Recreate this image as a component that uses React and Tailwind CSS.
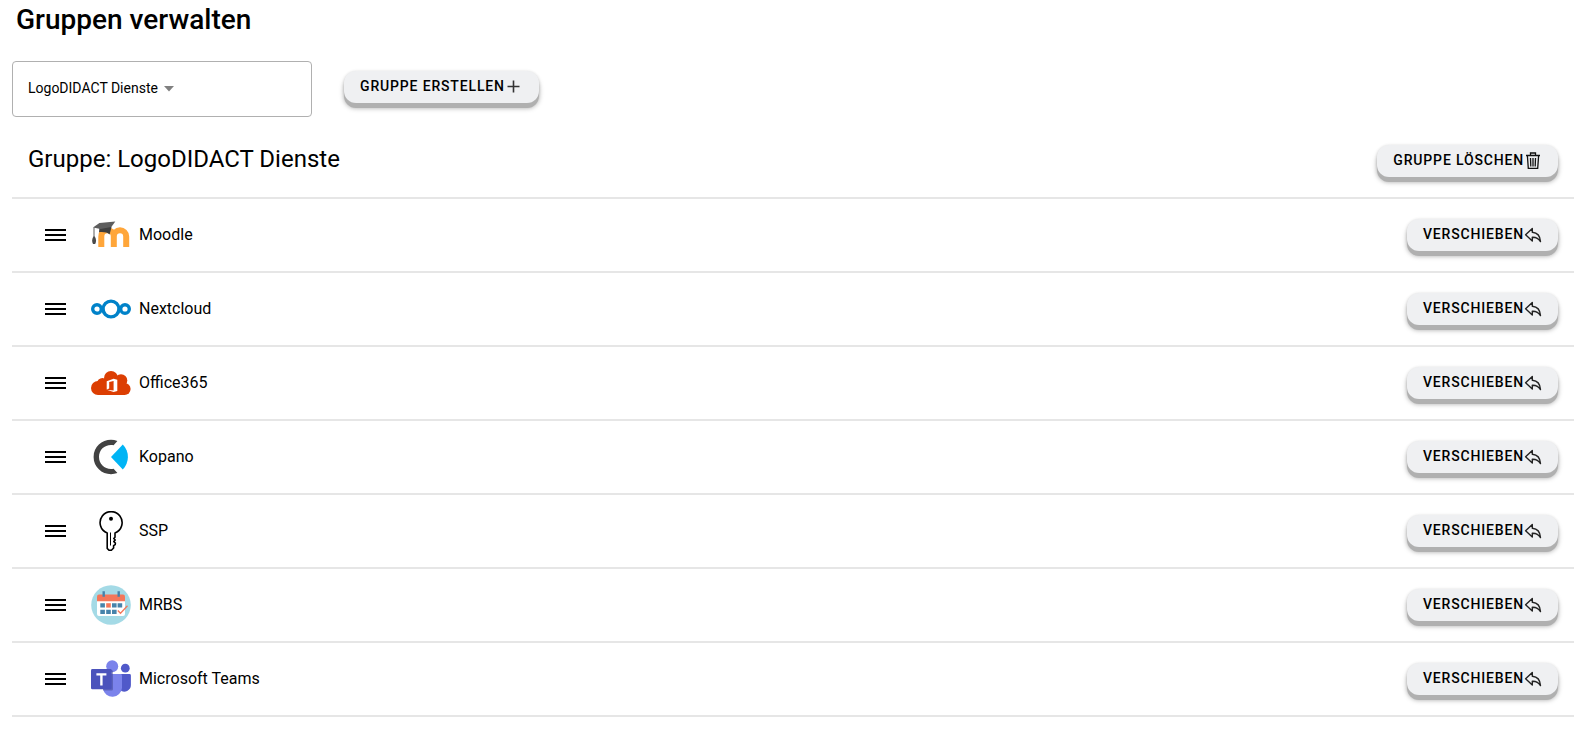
import React, { useState } from 'react';
import clsx from 'clsx';

const MoodleIcon = () => (
  <svg viewBox="0 0 40 40" className="size-10" aria-hidden="true">
    <path
      d="M10.300 32V21.400a6.200 6.200 0 0 1 12.500 0V32M22.800 32V21.400a6.200 6.200 0 0 1 12.400 0V32"
      fill="none"
      stroke="#ffa63a"
      strokeWidth="6"
    />
    <path d="M8.400 12.600 8 17.200c4.600-.6 8 .2 10.600 2.200l2-7.600z" fill="#3f3f3f" />
    <path d="M2 12.600 8.400 8 24.300 6.600l-4 5.400L9.600 14z" fill="#5d5d5d" />
    <path d="M3 12.600V22.500" stroke="#4a4a4a" strokeWidth="0.900" />
    <path d="M2.400 21.600h1.400c1.600 2.400 1.600 5.600.4 7.400H2c-1.200-1.800-1.200-5 .4-7.400z" fill="#4a4a4a" />
  </svg>
);

const NextcloudIcon = () => (
  <svg viewBox="0 0 40 40" className="size-10" fill="none" stroke="#0082c9" strokeWidth="3.400" aria-hidden="true">
    <circle cx="20" cy="20" r="7.900" />
    <circle cx="6" cy="20" r="4.300" />
    <circle cx="34" cy="20" r="4.300" />
  </svg>
);

const OfficeIcon = () => (
  <svg viewBox="0 0 40 40" className="size-10" aria-hidden="true">
    <g fill="#dc3e02">
      <circle cx="7" cy="25" r="7" />
      <circle cx="11.500" cy="20.500" r="5.500" />
      <circle cx="20" cy="15" r="7" />
      <circle cx="30" cy="17.500" r="6.300" />
      <circle cx="33.600" cy="26" r="6" />
      <path d="M7 32V20l8-4h15l4 4v12z" />
    </g>
    <path d="M15.700 18.200 22.600 15.700 26.300 16.800V28L22.600 29.100 15.700 26.700 22.600 27.500V18L18.200 19V25.500L15.700 26.600z" fill="#fff" />
  </svg>
);

const KopanoIcon = () => (
  <svg viewBox="0 0 40 40" className="size-10" aria-hidden="true">
    <path
      d="M26.400 4C15 -.2 2.600 7.600 2.600 20S15 40.200 26.400 36L22.600 31.700C14.800 33.200 8 27.900 8 20S14.800 6.800 22.600 8.300z"
      fill="#424242"
    />
    <path d="M20 20 31.800 7.600A17.600 17.600 0 0 1 31.800 32.400z" fill="#00b4f5" />
  </svg>
);

const KeyIcon = () => (
  <svg viewBox="0 0 40 40" className="size-10" fill="none" stroke="#000" strokeLinejoin="round" aria-hidden="true">
    <path
      d="M16.200 21.900A11 11 0 1 1 24 21.900V26.200L22.800 27.500 24.200 29 22.800 30.600 24.400 32 24.200 33.600 22.600 34.700V37L20.400 39.200H18L16.200 37.400z"
      strokeWidth="1.600"
    />
    <path d="M19.500 21.500V34.500" strokeWidth="1" />
    <circle cx="20" cy="7.700" r="2" fill="#000" stroke="none" />
  </svg>
);

const CalendarIcon = () => (
  <svg viewBox="0 0 40 40" className="size-10" aria-hidden="true">
    <circle cx="20" cy="20" r="19.800" fill="#a4dae6" />
    <path d="M6 15h28v14a2 2 0 0 1-2 2H8a2 2 0 0 1-2-2z" fill="#fff" />
    <path d="M6 16.200V11.500a2 2 0 0 1 2-2h24a2 2 0 0 1 2 2v4.700z" fill="#f4775a" />
    <path d="M12.700 6.300v5.500M27.700 6.300v5.500" stroke="#4683ab" strokeWidth="2.400" />
    <path
      d="M9.300 18.200h4.600v4.400H9.300zM21 18.200h4.600v4.400H21zM26.600 18.200h4.600v4.400h-4.600zM9.300 24.800h4.600v4.200H9.300zM15.200 24.800h4.600v4.200h-4.600zM21 24.800h4.600v4.200H21z"
      fill="#4683ab"
    />
    <path d="M15.200 18.200h4.600v4.400h-4.600z" fill="#f4775a" />
    <path d="m26.800 25.500 2.700 2.800 7-7.500" fill="none" stroke="#f4775a" strokeWidth="1.300" />
  </svg>
);

const TeamsIcon = () => (
  <svg viewBox="0 0 40 40" className="size-10" aria-hidden="true">
    <circle cx="34.300" cy="9.200" r="4.400" fill="#5059c9" />
    <path d="M29 15h9.500a1.400 1.400 0 0 1 1.400 1.400v9.300a6.700 6.700 0 0 1-10.900 5.400z" fill="#5059c9" />
    <circle cx="21.200" cy="7.300" r="6" fill="#7b83eb" />
    <path d="M12 15h17.600a1.400 1.400 0 0 1 1.400 1.400V29a9.600 9.600 0 0 1-19 1z" fill="#7b83eb" />
    <path d="M12 11h8.500a1.500 1.500 0 0 1 1.500 1.500v17.600a1.500 1.500 0 0 1-1.500 1.500H12z" fill="#3d4390" opacity="0.5" />
    <rect y="10" width="20.700" height="20.300" rx="1.400" fill="#4b53bc" />
    <path d="M5.400 15.400h10M10.400 15.400v11" stroke="#fff" strokeWidth="2.400" />
  </svg>
);

const PlusIcon = () => (
  <svg viewBox="0 0 18 18" className="size-[18px]" fill="none" stroke="#333" strokeWidth="1.600" aria-hidden="true">
    <path d="M8.500 2.500v12M2.500 8.500h12" />
  </svg>
);

const TrashIcon = () => (
  <svg viewBox="0 0 18 18" className="size-[18px]" fill="none" stroke="#111" strokeWidth="1.300" aria-hidden="true">
    <path d="M2 3.500h14M6.500 3.200V1h5v2.200M3.400 4l.9 12.400h9.400L14.600 4M6.500 6l.3 8.500M9 6v8.500M11.500 6l-.3 8.500" />
  </svg>
);

const MoveIcon = () => (
  <svg viewBox="0 0 18 18" className="size-[18px]" fill="none" stroke="#222" strokeWidth="1.400" strokeLinejoin="round" aria-hidden="true">
    <path d="M8.300 2.400 1.600 8.700l6.700 6.300v-3.800c3.900-.2 6 .7 8.200 4.400-.3-5.200-2.400-8.900-8.200-9.400z" />
  </svg>
);

const services = [
  { name: 'Moodle', icon: MoodleIcon },
  { name: 'Nextcloud', icon: NextcloudIcon },
  { name: 'Office365', icon: OfficeIcon },
  { name: 'Kopano', icon: KopanoIcon },
  { name: 'SSP', icon: KeyIcon },
  { name: 'MRBS', icon: CalendarIcon },
  { name: 'Microsoft Teams', icon: TeamsIcon },
];

const ActionButton = ({ children, icon: Icon, className }) => (
  <button
    type="button"
    className={clsx(
      'flex h-8 shrink-0 items-center rounded-xl bg-[#eff0f2] px-4 text-sm font-medium uppercase tracking-[0.06em] text-black shadow-[0_5px_0_#b0b0b0,0_5px_5px_rgba(0,0,0,0.35),0_0_3px_rgba(0,0,0,0.12)]',
      className
    )}
  >
    <span className="pb-0.5">{children}</span>
    <Icon />
  </button>
);

const ServiceRow = ({ name, icon: Icon }) => (
  <li className="flex h-[74px] items-center border-b-2 border-[#e6e6e6] pr-4 pl-8">
    <button type="button" aria-label={`${name} sortieren`} className="flex size-6 cursor-grab items-center justify-center">
      <svg viewBox="0 0 24 24" className="size-6" stroke="#000" strokeWidth="2" aria-hidden="true">
        <path d="M1 7h21M1 12h21M1 17h21" />
      </svg>
    </button>
    <span className="ml-[23px] flex flex-1 items-center gap-2">
      <Icon />
      <span>{name}</span>
    </span>
    <ActionButton icon={MoveIcon}>Verschieben</ActionButton>
  </li>
);

export default function App() {
  const [group, setGroup] = useState('LogoDIDACT Dienste');

  return (
    <main className="bg-white pr-[9px] pl-3 font-[Roboto,sans-serif] text-base text-black">
      <h1 className="px-1 pt-0.5 text-[28px] leading-9 font-medium">Gruppen verwalten</h1>

      <div className="mt-[23px] flex items-center gap-8">
        <div className="flex h-14 w-[300px] items-center rounded border border-[#b0b0b0] px-[15px] text-sm">
          <select
            aria-label="Gruppe auswählen"
            value={group}
            onChange={(e) => setGroup(e.target.value)}
            className="h-8 appearance-none bg-transparent pr-1 pb-0.5 outline-none"
          >
            <option>LogoDIDACT Dienste</option>
          </select>
          <svg viewBox="0 0 12 6" className="h-1.5 w-3" fill="#808080" aria-hidden="true">
            <path d="M1 0h10L6 5.500z" />
          </svg>
        </div>
        <ActionButton icon={PlusIcon} className="mb-1">
          Gruppe erstellen
        </ActionButton>
      </div>

      <section>
        <header className="mt-2 flex h-[74px] items-center justify-between border-b-2 border-[#e6e6e6] px-4">
          <h2 className="pb-1 text-2xl">Gruppe: {group}</h2>
          <ActionButton icon={TrashIcon}>Gruppe löschen</ActionButton>
        </header>
        <ul>
          {services.map((service) => (
            <ServiceRow key={service.name} {...service} />
          ))}
        </ul>
      </section>
    </main>
  );
}
